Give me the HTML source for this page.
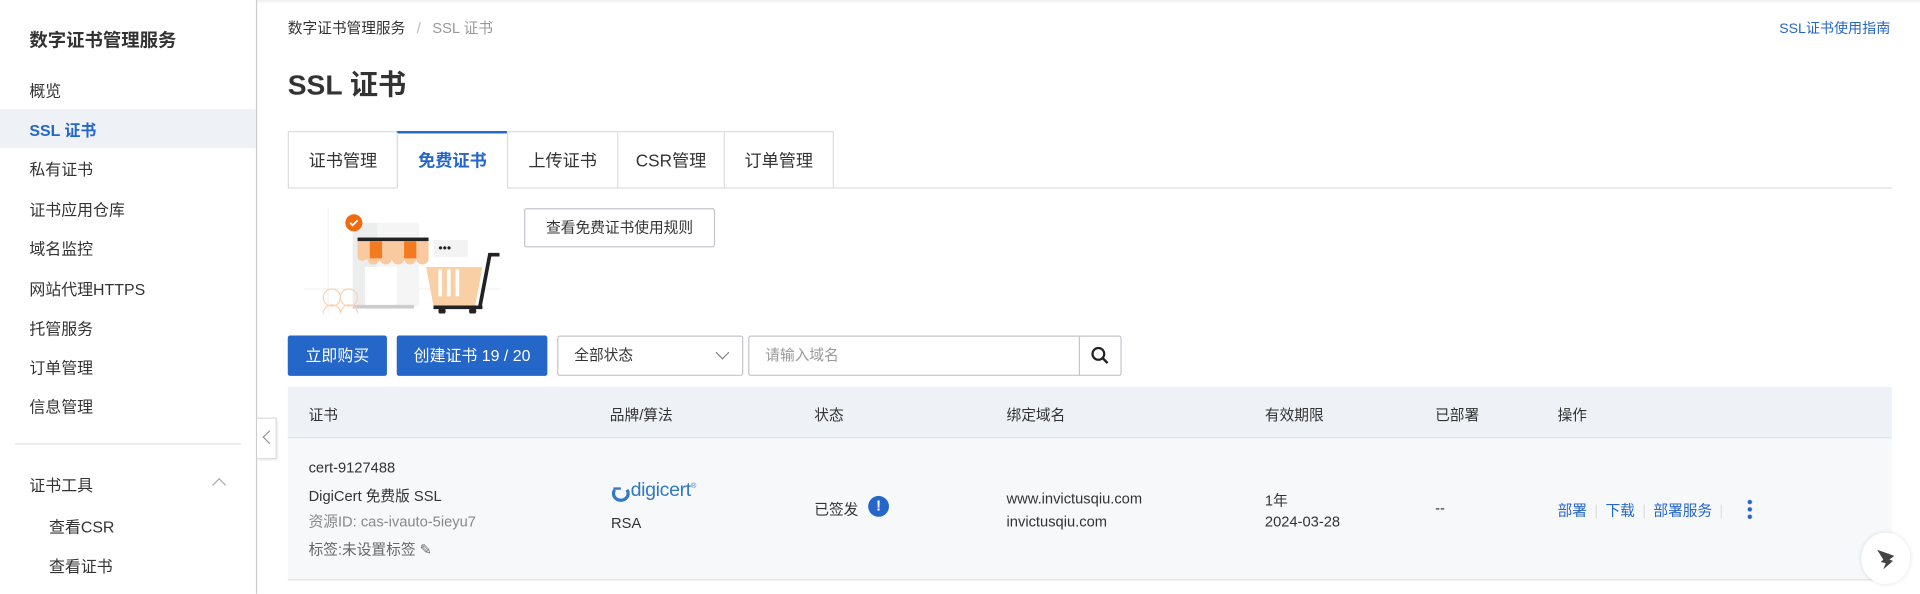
<!DOCTYPE html>
<html><head><meta charset="utf-8"><style>
*{box-sizing:border-box;margin:0;padding:0}
body{width:1920px;height:593px;overflow:hidden;background:#fff;font-family:"Liberation Sans","Noto Sans CJK SC",sans-serif;color:#333}
#w{position:absolute;left:0;top:0;width:1568px;height:485px;transform:scale(1.2245);transform-origin:0 0}
.a{position:absolute;white-space:nowrap}
.side{position:absolute;left:0;top:0;width:210px;height:485px;border-right:1px solid #ccc;background:#fff}
.side .i{position:absolute;left:24px;font-size:13px;color:#333}
.tab{position:absolute;top:107px;height:47px;border:1px solid #ddd;font-size:14px;line-height:46px;text-align:center;background:#fff}
.btn{position:absolute;top:274px;height:33px;background:#2566c9;color:#fff;font-size:13px;line-height:33px;text-align:center;border-radius:2px}
.th{position:absolute;top:330px;font-size:12px;color:#333}
.td{position:absolute;font-size:12px;color:#333}
.lk{color:#2566c9}
</style></head><body><div id="w">
<div class="a" style="left:0;top:0;width:1568px;height:3px;background:linear-gradient(#eee,#fff)"></div>
<div class="side">
<div class="i" style="top:22px;font-size:15px;font-weight:bold">数字证书管理服务</div>
<div class="i" style="top:64px">概览</div>
<div style="position:absolute;left:0;top:89px;width:209px;height:32px;background:#eef1f6"></div>
<div class="i" style="top:96px;color:#2566c9;font-weight:bold">SSL 证书</div>
<div class="i" style="top:128px">私有证书</div>
<div class="i" style="top:161px">证书应用仓库</div>
<div class="i" style="top:193px">域名监控</div>
<div class="i" style="top:226px">网站代理HTTPS</div>
<div class="i" style="top:258px">托管服务</div>
<div class="i" style="top:290px">订单管理</div>
<div class="i" style="top:322px">信息管理</div>
<div style="position:absolute;left:12px;top:362px;width:185px;height:1px;background:#e3e3e3"></div>
<div class="i" style="top:386px">证书工具</div>
<div style="position:absolute;left:175px;top:392px;width:8px;height:8px;border-left:1px solid #aaa;border-top:1px solid #aaa;transform:rotate(45deg)"></div>
<div class="i" style="left:40px;top:420px">查看CSR</div>
<div class="i" style="left:40px;top:452px">查看证书</div>
</div>
<div class="a" style="left:210px;top:341px;width:16px;height:34px;background:#fff;border:1px solid #ddd;border-left:none;box-shadow:1px 1px 2px rgba(0,0,0,.1)"></div>
<div class="a" style="left:216px;top:353px;width:8px;height:8px;border-left:1px solid #999;border-bottom:1px solid #999;transform:rotate(45deg)"></div>
<div class="a" style="left:235px;top:14px;font-size:12px;color:#333">数字证书管理服务 <span style="color:#bbb;margin:0 6px">/</span> <span style="color:#999">SSL 证书</span></div>
<div class="a lk" style="left:1453px;top:15px;font-size:11.5px">SSL证书使用指南</div>
<div class="a" style="left:235px;top:50px;font-size:23px;font-weight:bold;color:#333">SSL 证书</div>
<div class="a" style="left:235px;top:153px;width:1310px;height:1px;background:#ddd"></div>
<div class="tab" style="left:235px;width:90px">证书管理</div>
<div class="tab" style="left:324px;width:91px;border-top:2px solid #2566c9;border-bottom-color:#fff;color:#2566c9;font-weight:bold;line-height:44px">免费证书</div>
<div class="tab" style="left:414px;width:91px">上传证书</div>
<div class="tab" style="left:504px;width:88px">CSR管理</div>
<div class="tab" style="left:591px;width:90px">订单管理</div>
<svg class="a" style="left:248px;top:170px" width="160" height="86" viewBox="0 0 160 86">
<line x1="0" y1="66" x2="160" y2="66" stroke="#f0f0f0"/><line x1="20" y1="0" x2="20" y2="86" stroke="#f3f3f3"/>
<rect x="40" y="12" width="54" height="68" fill="#eceded"/><rect x="60" y="12" width="34" height="68" fill="#f5f5f5"/>
<rect x="44" y="24" width="58" height="3" fill="#222"/>
<path d="M44 27h58v14a5 5 0 0 1-10 0 5 5 0 0 1-10 0 5 5 0 0 1-10 0 5 5 0 0 1-10 0 5 5 0 0 1-10 0 5 5 0 0 1-8 0z" fill="#f9c9a0"/>
<rect x="54" y="27" width="10" height="14" fill="#f47a1f"/><rect x="82" y="27" width="10" height="14" fill="#f47a1f"/>
<rect x="50" y="48" width="26" height="32" fill="#fff"/>
<circle cx="41" cy="12" r="7" fill="#f06a10"/><path d="M38 12l2 2 4-4" stroke="#fff" fill="none" stroke-width="1.5"/>
<rect x="106" y="26" width="28" height="14" fill="#f3f3f3"/><text x="110" y="36" font-size="10" fill="#222">•••</text>
<path d="M100 48h46l-6 32h-34z" fill="#f9cfa6"/><rect x="110" y="50" width="3" height="22" fill="#fff"/><rect x="117" y="50" width="3" height="22" fill="#fff"/><rect x="124" y="50" width="3" height="22" fill="#fff"/>
<path d="M144 80l8-42h8" stroke="#222" stroke-width="3" fill="none"/><path d="M106 81h40" stroke="#222" stroke-width="3"/>
<circle cx="113" cy="84" r="3" fill="#222"/><circle cx="138" cy="84" r="3" fill="#222"/>
<rect x="40" y="79" width="50" height="3" fill="#ccc"/>
<g fill="none" stroke="#f9d3b6"><circle cx="23" cy="73" r="7"/><circle cx="37" cy="73" r="7"/><circle cx="23" cy="86" r="7"/><circle cx="37" cy="86" r="7"/></g>
</svg>
<div class="a" style="left:428px;top:170px;width:156px;height:32px;border:1px solid #c4c6cc;border-radius:2px;font-size:12px;line-height:30px;text-align:center">查看免费证书使用规则</div>
<div class="btn" style="left:235px;width:81px">立即购买</div>
<div class="btn" style="left:324px;width:123px">创建证书 19 / 20</div>
<div class="a" style="left:455px;top:274px;width:152px;height:33px;border:1px solid #c4c6cc;border-radius:2px;font-size:12px;line-height:31px;padding-left:13px">全部状态</div>
<div class="a" style="left:586px;top:284px;width:8px;height:8px;border-right:1px solid #888;border-bottom:1px solid #888;transform:rotate(45deg)"></div>
<div class="a" style="left:611px;top:274px;width:305px;height:33px;border:1px solid #c4c6cc;border-radius:2px;font-size:12px;line-height:31px;padding-left:13px;color:#999">请输入域名</div>
<div class="a" style="left:881px;top:274px;width:1px;height:33px;background:#c4c6cc"></div>
<svg class="a" style="left:891px;top:283px" width="15" height="15"><circle cx="6" cy="6" r="4.8" stroke="#222" stroke-width="1.8" fill="none"/><path d="M9.5 9.5l4 4" stroke="#222" stroke-width="2"/></svg>
<div class="a" style="left:235px;top:316px;width:1310px;height:42px;background:#eef1f6;border-bottom:1px solid #dde1e8"></div>
<div class="a" style="left:235px;top:358px;width:1310px;height:116px;background:#f7f8fa;border-bottom:1px solid #e3e3e3"></div>
<div class="th" style="left:252px">证书</div><div class="th" style="left:498px">品牌/算法</div><div class="th" style="left:665px">状态</div><div class="th" style="left:822px">绑定域名</div><div class="th" style="left:1033px">有效期限</div><div class="th" style="left:1172px">已部署</div><div class="th" style="left:1272px">操作</div>
<div class="td" style="left:252px;top:375px">cert-9127488</div>
<div class="td" style="left:252px;top:396px">DigiCert 免费版 SSL</div>
<div class="td" style="left:252px;top:417px;color:#888">资源ID: cas-ivauto-5ieyu7</div>
<div class="td" style="left:252px;top:440px;color:#666">标签:未设置标签 ✎</div>
<svg class="a" style="left:499px;top:397px" width="16" height="14"><path d="M3 3 A6 5.5 0 1 0 13 3" stroke="#2f7ac2" stroke-width="2.6" fill="none"/><path d="M2 2h6" stroke="#2f7ac2" stroke-width="2"/></svg>
<div class="td" style="left:515px;top:392px;font-size:16px;color:#2f7ac2;letter-spacing:-.3px">digicert<sup style="font-size:6px">®</sup></div>
<div class="td" style="left:499px;top:420px">RSA</div>
<div class="td" style="left:665px;top:407px">已签发</div>
<div class="a" style="left:709px;top:405px;width:17px;height:17px;border-radius:50%;background:#2566c9;color:#fff;font-size:12px;font-weight:bold;text-align:center;line-height:17px">!</div>
<div class="td" style="left:822px;top:400px">www.invictusqiu.com</div>
<div class="td" style="left:822px;top:419px">invictusqiu.com</div>
<div class="td" style="left:1033px;top:400px">1年</div>
<div class="td" style="left:1033px;top:419px">2024-03-28</div>
<div class="td" style="left:1172px;top:408px">--</div>
<div class="td lk" style="left:1272px;top:408px">部署<span style="color:#ddd;margin:0 6px">|</span>下载<span style="color:#ddd;margin:0 6px">|</span>部署服务<span style="color:#ddd;margin:0 6px">|</span></div>
<div class="a" style="left:1427px;top:407px;width:4px;height:18px;background:radial-gradient(circle,#2566c9 1.6px,transparent 2px) 0 0/4px 6px"></div>
<div class="a" style="left:1520px;top:435px;width:40px;height:42px;border-radius:50%;background:#fff;box-shadow:0 0 4px rgba(0,0,0,.12)"></div>
<svg class="a" style="left:1532px;top:446px" width="16" height="20"><path d="M1 3l14 5-4 3 3 1-8 7 2-5-4-1 2-2z" fill="#444"/></svg>
</div></body></html>
